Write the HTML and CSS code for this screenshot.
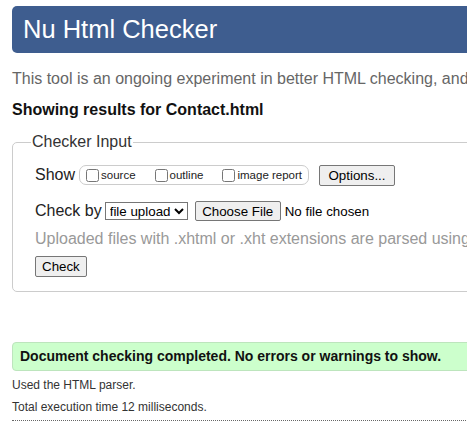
FILE: index.html
```html
<!DOCTYPE html>
<html>
<head>
<meta charset="utf-8">
<link rel="stylesheet" href="styles.css">
</head>
<body>
<h1 class="title">Nu Html Checker</h1>
<p class="intro">This tool is an ongoing experiment in better HTML checking, and its behavior remains subject to change</p>
<p class="showing">Showing results for Contact.html</p>
<fieldset class="input">
  <legend>Checker Input</legend>
  <div class="row show-row">
    <span class="label">Show</span>
    <span class="group">
      <label><input type="checkbox">source</label>
      <label><input type="checkbox">outline</label>
      <label><input type="checkbox">image report</label>
    </span>
    <button class="btn">Options...</button>
  </div>
  <div class="row by-row">
    <span class="label">Check by</span>
    <select class="sel"><option>file upload</option></select>
    <button class="btn file">Choose File</button>
    <span class="nofile">No file chosen</span>
  </div>
  <p class="hint">Uploaded files with .xhtml or .xht extensions are parsed using the XML parser.</p>
  <button class="btn check">Check</button>
</fieldset>
<p class="success">Document checking completed. No errors or warnings to show.</p>
<p class="small">Used the HTML parser.</p>
<p class="small">Total execution time 12 milliseconds.</p>
<hr class="dots">
</body>
</html>
```
FILE: styles.css
```css
html, body { margin: 0; padding: 0; overflow: hidden; }
body {
  width: 600px;
  padding: 6px 0 0 12px;
  font-family: "Liberation Sans", Arial, sans-serif;
  color: #222;
  background: #fff;
}
.title {
  margin: 0;
  height: 47px;
  box-sizing: border-box;
  background: #3e5d8f;
  color: #fff;
  font-weight: normal;
  font-size: 25.5px;
  line-height: 47px;
  padding-left: 11px;
  border-radius: 5px;
}
.intro {
  margin: 16px 0 0 0;
  font-size: 16px;
  line-height: 20px;
  color: #666;
  white-space: nowrap;
}
.showing {
  margin: 11px 0 0 0;
  font-size: 16px;
  line-height: 20px;
  font-weight: bold;
  color: #111;
}
.input {
  margin: 13px 0 0 0;
  padding: 13px 22px 12px 22px;
  border: 1px solid #ccc;
  border-radius: 5px;
  height: 159px;
  box-sizing: border-box;
  min-width: 0;
}
.input legend {
  font-size: 16px;
  color: #333;
  padding: 0 1px;
  margin-left: -4px;
}
.row {
  display: flex;
  align-items: center;
  white-space: nowrap;
}
.label {
  font-size: 16px;
  color: #222;
}
.show-row { height: 22px; }
.group {
  display: inline-flex;
  align-items: center;
  margin-left: 4px;
  border: 1px solid #ccc;
  border-radius: 7px;
  height: 18px;
  padding: 0 6px 0 6px;
  font-size: 11.5px;
  color: #222;
}
.group label { display: inline-flex; align-items: center; margin-right: 19px; }
.group label:last-child { margin-right: 0; }
.group input {
  margin: 0 2px 0 0;
  width: 13px;
  height: 13px;
}
.btn {
  font-family: "Liberation Sans", Arial, sans-serif;
  font-size: 13.33px;
  background: #efefef;
  border: 1px solid #767676;
  border-radius: 2px;
  color: #000;
  padding: 1px 6px;
  height: 21px;
}
.show-row .btn { margin-left: 10px; width: 76px; }
.by-row { margin-top: 14px; height: 22px; }
.sel {
  margin-left: 3px;
  font-family: "Liberation Sans", Arial, sans-serif;
  font-size: 13.33px;
  height: 18px;
  padding: 0;
  border: 1px solid #767676;
  border-radius: 0;
  background: #fff;
  color: #000;
}
.file { margin-left: 7px; height: 20px; width: 86px; }
.nofile { font-size: 13.33px; margin-left: 4px; color: #000; }
.hint {
  margin: 7px 0 0 0;
  font-size: 16px;
  line-height: 20px;
  color: #999;
  white-space: nowrap;
}
.check { margin-top: 7px; display: block; margin-left: 0; }
.success {
  margin: 50px 0 0 0;
  background: #ccffcc;
  border: 1px solid #bde5bd;
  border-radius: 4px;
  padding: 0 7px;
  height: 29px;
  box-sizing: border-box;
  line-height: 27px;
  font-size: 14px;
  font-weight: bold;
  color: #111;
}
.small {
  margin: 7px 0 0 0;
  font-size: 12px;
  line-height: 14px;
  color: #333;
}
.small + .small { margin-top: 8px; }
.dots {
  margin: 6px 0 0 0;
  border: 0;
  border-top: 1px dotted #666;
  height: 0;
}
```
